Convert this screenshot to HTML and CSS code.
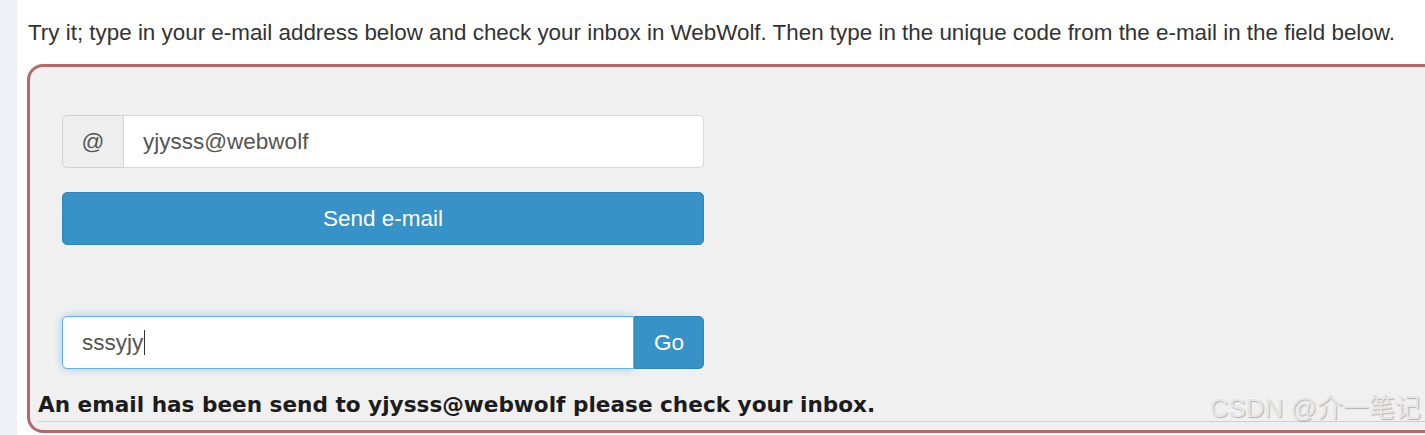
FILE: index.html
```html
<!DOCTYPE html>
<html>
<head>
<meta charset="utf-8">
<link rel="stylesheet" href="styles.css">
</head>
<body>
<div class="page">
  <aside class="rail"></aside>
  <main class="content">
    <p class="intro">Try it; type in your e-mail address below and check your inbox in WebWolf. Then type in the unique code from the e-mail in the field below.</p>
    <div class="attack-box">
      <form class="form">
        <div class="input-group">
          <span class="addon">@</span>
          <input class="field" type="text" value="yjysss@webwolf">
        </div>
        <button type="button" class="btn btn-block">Send e-mail</button>
      </form>
      <form class="form form-code">
        <div class="input-group">
          <div class="field field-focus"><span>sssyjy</span><span class="caret"></span></div>
          <button type="button" class="btn btn-go">Go</button>
        </div>
      </form>
      <div class="feedback">An email has been send to yjysss@webwolf please check your inbox.</div>
      <hr class="rule">
    </div>
  </main>
  <div class="watermark">CSDN @介一笔记</div>
</div>
</body>
</html>
```
FILE: styles.css
```css
html, body {
  margin: 0;
  padding: 0;
  background: #ffffff;
  overflow: hidden;
}
.page {
  display: flex;
  width: 1425px;
  height: 435px;
  overflow: hidden;
  position: relative;
  font-family: "Liberation Sans", Arial, sans-serif;
}
.rail {
  width: 17px;
  flex: none;
  background: #eff0f5;
}
.content {
  flex: 1;
  padding-left: 10px;
  min-width: 0;
}
.intro {
  margin: 20px 0 0 1px;
  font-size: 22.4px;
  line-height: 26px;
  color: #333333;
  white-space: nowrap;
}
.attack-box {
  margin-top: 18px;
  width: 1420px;
  height: 369px;
  box-sizing: border-box;
  border: 3px solid #b5686c;
  border-radius: 16px;
  background: #f0f0f0;
  padding: 48px 0 0 8px;
}
.form {
  width: 642px;
  margin-left: 24px;
  display: flex;
  flex-direction: column;
  gap: 24px;
}
.form-code {
  margin-top: 71px;
}
.input-group {
  display: flex;
  height: 53px;
}
.addon {
  width: 62px;
  box-sizing: border-box;
  border: 1px solid #d2d2d2;
  border-radius: 5px 0 0 5px;
  background: #eeeeee;
  color: #555555;
  font-size: 22.5px;
  display: flex;
  align-items: center;
  justify-content: center;
}
.field {
  flex: 1;
  box-sizing: border-box;
  height: 53px;
  border: 1px solid #d8d8d8;
  border-left: none;
  border-radius: 0 5px 5px 0;
  background: #ffffff;
  padding: 0 19px;
  font-family: "Liberation Sans", Arial, sans-serif;
  font-size: 22.5px;
  color: #555555;
  outline: none;
  margin: 0;
}
.field-focus {
  border: 1px solid #66afe9;
  border-radius: 5px 0 0 5px;
  box-shadow: inset 0 1px 1px rgba(0,0,0,.075), 0 0 8px rgba(102,175,233,.6);
  display: flex;
  align-items: center;
  padding-left: 19px;
}
.caret {
  display: inline-block;
  width: 1px;
  height: 25px;
  background: #333;
  margin-left: 1px;
}
.btn {
  box-sizing: border-box;
  height: 53px;
  border: 1px solid #2f86bd;
  background: #3792c8;
  color: #ffffff;
  font-family: "Liberation Sans", Arial, sans-serif;
  font-size: 22.5px;
  border-radius: 5px;
  padding: 0;
  cursor: pointer;
}
.btn-block {
  width: 100%;
}
.btn-go {
  width: 70px;
  flex: none;
  border-radius: 0 5px 5px 0;
}
.feedback {
  margin: 23px 0 0 0;
  font-family: "DejaVu Sans", sans-serif;
  font-weight: bold;
  font-size: 21.6px;
  line-height: 26px;
  color: #1c1c1c;
  white-space: nowrap;
}
.rule {
  margin: 3px 0 0 0;
  border: none;
  border-top: 1px solid #cfcfcf;
  height: 0;
}
.watermark {
  position: absolute;
  right: 4px;
  bottom: 12px;
  font-family: "Liberation Sans", "Noto Sans CJK SC", sans-serif;
  font-size: 26px;
  line-height: 30px;
  color: #e6e6e6;
  text-shadow: 1px 1px 1px rgba(0,0,0,.25);
}
```
